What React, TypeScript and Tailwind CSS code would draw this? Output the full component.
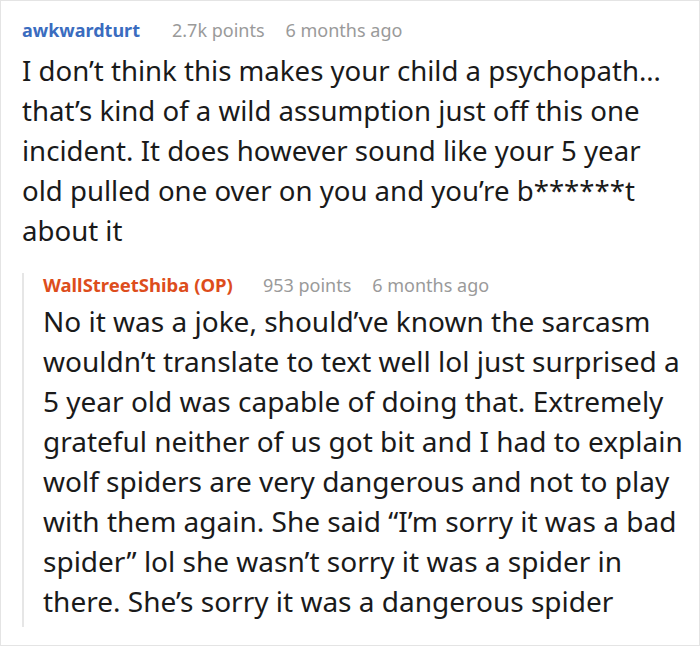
import React from "react";

const firstLines = [
  "I don\u2019t think this makes your child a psychopath\u2026",
  "that\u2019s kind of a wild assumption just off this one",
  "incident. It does however sound like your 5 year",
  "old pulled one over on you and you\u2019re b******t",
  "about it",
];

const replyLines = [
  "No it was a joke, should\u2019ve known the sarcasm",
  "wouldn\u2019t translate to text well lol just surprised a",
  "5 year old was capable of doing that. Extremely",
  "grateful neither of us got bit and I had to explain",
  "wolf spiders are very dangerous and not to play",
  "with them again. She said \u201cI\u2019m sorry it was a bad",
  "spider\u201d lol she wasn\u2019t sorry it was a spider in",
  "there. She\u2019s sorry it was a dangerous spider",
];

export default function App() {
  return (
    <div
      className="w-[700px] h-[646px] overflow-hidden bg-white border border-[#e4e4e4] pl-[21px] pt-[17px] text-[#1a1a1a]"
      style={{ fontFamily: '"Noto Sans", "Open Sans", sans-serif' }}
    >
      <div className="flex items-center h-[24px] text-[18px] leading-[24px]">
        <span className="font-bold text-[#3a6cbf]">awkwardturt</span>
        <span className="ml-[32px] text-[#9a9a9a]">2.7k points</span>
        <span className="ml-[21px] text-[#9a9a9a]">6 months ago</span>
      </div>
      <div className="mt-[8px] text-[27.6px] leading-[40px] whitespace-nowrap">
        {firstLines.map((l, i) => (
          <div key={i}>{l}</div>
        ))}
      </div>
      <div className="mt-[33px] border-l-2 border-[#e6e6e6] pl-[19px] pb-[6px]">
        <div className="-mt-[10px] flex items-center h-[24px] text-[18px] leading-[24px]">
          <span className="font-bold text-[#dd4d1c] text-[18.5px]">WallStreetShiba (OP)</span>
          <span className="ml-[30px] text-[#9a9a9a]">953 points</span>
          <span className="ml-[21px] text-[#9a9a9a]">6 months ago</span>
        </div>
        <div className="mt-[4px] text-[28px] leading-[40px] whitespace-nowrap">
          {replyLines.map((l, i) => (
            <div key={i}>{l}</div>
          ))}
        </div>
      </div>
    </div>
  );
}
